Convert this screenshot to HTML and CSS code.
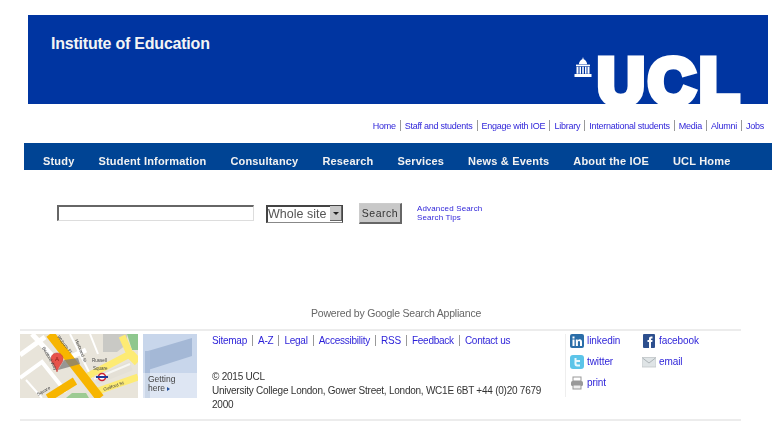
FILE: index.html
```html
<!DOCTYPE html>
<html lang="en">
<head>
<meta charset="utf-8">
<title>Search - Institute of Education</title>
<link rel="stylesheet" href="styles.css">
</head>
<body>
<div class="page">
  <header class="banner">
    <h1 class="title">Institute of Education</h1>
    <div class="logo">
      <svg class="dome" width="18" height="21" viewBox="0 0 18 21" aria-hidden="true">
        <path fill="#fff" d="M9 0l.7 2.2c2 .8 3.2 2.6 3.4 5H4.900c.2-2.400 1.400-4.200 3.400-5z"/>
        <rect fill="#fff" x="2" y="7.600" width="14" height="1.600"/>
        <path fill="#fff" d="M2.500 9.800h2v7h-2zM5.500 9.800h1.500v7H5.500zM8.200 9.800h1.600v7H8.200zM11 9.800h1.500v7H11zM13.500 9.800h2v7h-2z"/>
        <rect fill="#fff" x="0.500" y="17" width="17" height="3"/>
      </svg>
      <span class="wordmark">UCL</span>
    </div>
  </header>

  <nav class="toplinks">
    <a href="#">Home</a><a href="#">Staff and students</a><a href="#">Engage with IOE</a><a href="#">Library</a><a href="#">International students</a><a href="#">Media</a><a href="#">Alumni</a><a href="#">Jobs</a>
  </nav>

  <nav class="mainnav">
    <a href="#">Study</a><a href="#">Student Information</a><a href="#">Consultancy</a><a href="#">Research</a><a href="#">Services</a><a href="#">News &amp; Events</a><a href="#">About the IOE</a><a href="#">UCL Home</a>
  </nav>

  <form class="search">
    <input class="query" type="text" aria-label="Search">
    <span class="selectwrap">
      <select class="scope" aria-label="Scope"><option>Whole site</option></select>
      <span class="arrow"></span>
    </span>
    <button class="go" type="button">Search</button>
    <div class="adv">
      <a href="#">Advanced Search</a>
      <a href="#">Search Tips</a>
    </div>
  </form>

  <p class="powered">Powered by Google Search Appliance</p>

  <footer class="footer">
    <div class="map">
      <svg width="118" height="64" viewBox="0 0 118 64" aria-hidden="true">
        <rect width="118" height="64" fill="#e8e4da"/>
        <g stroke="#fff" fill="none">
          <path stroke-width="5" d="M0 21L25 3M12 0L40 30"/>
          <path stroke-width="4" d="M0 44L22 28 46 58"/>
          <path stroke-width="5" d="M44 26L66 16"/>
          <path stroke-width="2" d="M50 0L72 44M70 0L78 20M6 46L22 64"/>
        </g>
        <path d="M83 0h24v10l-10 8h-14z" fill="#c9c9c5"/>
        <path d="M107 0h11v16h-6z" fill="#8ec78e"/>
        <path d="M46 64l6-5h14l3 5z" fill="#9ccb93"/>
        <path d="M68 42L110 20 102 2" stroke="#fdeb74" stroke-width="7" fill="none"/>
        <path d="M110 20L118 28" stroke="#fdeb74" stroke-width="9" fill="none"/>
        <path d="M75 58L118 43" stroke="#fdeb74" stroke-width="7" fill="none"/>
        <path d="M76 46L111 32" stroke="#e4e0d6" stroke-width="9" fill="none"/>
        <path d="M74 45L110 30" stroke="#f7f7f3" stroke-width="2" fill="none"/>
        <path d="M55 47L28 64" stroke="#f7b500" stroke-width="8" fill="none"/>
        <path d="M30 0L80 64" stroke="#f7b500" stroke-width="9" fill="none"/>
        <path d="M38 36L44 26 58 24 60 30z" fill="#7c7c7c" opacity=".75"/>
        <path d="M37 19c-4 0-6 3-6 6 0 4 4 6 6 13 2-7 6-9 6-13 0-3-2-6-6-6z" fill="#e8524a" stroke="#b33" stroke-width=".5"/>
        <text class="pin" x="37" y="27" text-anchor="middle">A</text>
        <circle cx="82" cy="43" r="3.500" fill="#fff" stroke="#d02030" stroke-width="1.600"/>
        <rect x="76" y="42" width="12" height="2" fill="#223c9a"/>
        <g class="maptext">
          <text x="72" y="28">Russell</text>
          <text x="73" y="36">Square</text>
          <text x="84" y="57" transform="rotate(-19 84 57)">Guilford St</text>
          <text x="37" y="3" transform="rotate(52 37 3)">Woburn Pl</text>
          <text x="22" y="14" transform="rotate(60 22 14)">Bedford Way</text>
          <text x="55" y="6" transform="rotate(68 55 6)">Herbrand St</text>
          <text x="18" y="62" transform="rotate(-30 18 62)">Square</text>
        </g>
      </svg>
    </div>
    <div class="getting">
      <svg class="sign" width="54" height="64" viewBox="0 0 54 64" aria-hidden="true">
        <path d="M5 17L49 4v18L5 36z" fill="#a4b8d6"/>
        <rect x="2" y="17" width="5" height="47" fill="#a9bcd9"/>
        <rect y="39" width="54" height="25" fill="#fff" opacity=".4"/>
      </svg>
      <span class="gettext">Getting<br>here <i class="tri"></i></span>
    </div>
    <div class="info">
      <div class="links">
        <a href="#">Sitemap</a><a href="#">A-Z</a><a href="#">Legal</a><a href="#">Accessibility</a><a href="#">RSS</a><a href="#">Feedback</a><a href="#">Contact us</a>
      </div>
      <p class="address">© 2015 UCL<br>University College London, Gower Street, London, WC1E 6BT +44 (0)20 7679 2000</p>
    </div>
    <div class="social">
      <a href="#"><svg width="14" height="14" viewBox="0 0 14 14" aria-hidden="true"><rect width="14" height="14" rx="2" fill="#2a6da8"/><path fill="#fff" d="M2.500 5.500h2V12h-2zM2.500 2.500h2v2h-2zM5.800 5.500h1.900v1c.5-.8 1.200-1.200 2.100-1.200 1.500 0 2.200 1 2.200 2.600V12h-2V8.300c0-.8-.3-1.200-.9-1.200s-1.200.4-1.200 1.300V12h-2z"/></svg>linkedin</a>
      <a href="#"><svg width="14" height="14" viewBox="0 0 14 14" aria-hidden="true"><rect x="1" width="12" height="14" rx="1" fill="#2d4f8e"/><path fill="#fff" d="M7 14V8H5.500V6H7V4.700C7 3.200 7.900 2.400 9.200 2.400h1.300v2H9.600c-.5 0-.6.300-.6.700V6h1.500l-.2 2H9v6z"/></svg>facebook</a>
      <a href="#"><svg width="14" height="14" viewBox="0 0 14 14" aria-hidden="true"><rect width="14" height="14" rx="3" fill="#5cc4e8"/><path fill="#e8f8fd" d="M4.500 3h2v2H10v2H6.500v1.500c0 .7.300 1 1 1H10v2H7c-1.700 0-2.500-.9-2.500-2.500z"/></svg>twitter</a>
      <a href="#"><svg width="14" height="14" viewBox="0 0 14 14" aria-hidden="true"><rect y="2.500" width="14" height="9.500" fill="#dfe4e6" stroke="#c0c6c9" stroke-width=".8"/><path d="M.5 3L7 8l6.500-5" fill="none" stroke="#aeb5b9"/></svg>email</a>
      <a href="#"><svg width="14" height="14" viewBox="0 0 14 14" aria-hidden="true"><rect x="3" y="1" width="8" height="4" fill="#fff" stroke="#999"/><rect x="1" y="5" width="12" height="5" rx="1.500" fill="#999"/><rect x="3" y="9" width="8" height="4" fill="#eee" stroke="#999"/></svg>print</a>
    </div>
  </footer>
</div>
</body>
</html>
```

FILE: styles.css
```css
html, body {
  margin: 0;
  padding: 0;
  background: #fff;
}
body {
  font-family: "Liberation Sans", Arial, sans-serif;
  overflow: hidden;
}
a {
  color: #2a1fd8;
  text-decoration: none;
}
.page {
  width: 777px;
  height: 423px;
  padding-top: 15px;
  box-sizing: border-box;
  overflow: hidden;
  filter: blur(0.35px);
}
.banner {
  display: flex;
  justify-content: space-between;
  height: 89px;
  margin: 0 9px 0 28px;
  background: #0035a1;
  overflow: hidden;
}
.title {
  margin: 20px 0 0 23px;
  font-size: 16px;
  line-height: 18px;
  font-weight: bold;
  letter-spacing: -0.22px;
  color: #f4f4f4;
}
.logo {
  display: flex;
  align-items: flex-start;
  margin: 42px 25px 0 0;
}
.dome {
  margin: 0 5px 0 0;
}
.wordmark {
  font-size: 65px;
  line-height: 50px;
  font-weight: bold;
  color: #fff;
  -webkit-text-stroke: 7px #fff;
  letter-spacing: 4px;
}
.toplinks {
  display: flex;
  justify-content: flex-end;
  height: 39px;
  padding: 16px 13px 0 0;
  box-sizing: border-box;
  font-size: 9px;
  line-height: 12px;
  letter-spacing: -0.25px;
}
.toplinks a {
  padding: 0 4px 0 4px;
  border-right: 1px solid #999;
  height: 11px;
}
.toplinks a:last-child {
  border-right: 0;
  padding-right: 0;
}
.mainnav {
  display: flex;
  gap: 24px;
  height: 27px;
  margin: 0 5px 0 24px;
  padding-left: 19px;
  box-sizing: border-box;
  background: #004494;
  font-size: 11px;
  line-height: 36px;
  font-weight: bold;
  letter-spacing: 0.18px;
}
.mainnav a {
  color: #f2f2f2;
}
.search {
  display: flex;
  align-items: flex-start;
  height: 134px;
  padding: 33px 0 0 57px;
  box-sizing: border-box;
}
.query {
  width: 197px;
  height: 16px;
  margin: 2px 12px 0 0;
  padding: 0;
  box-sizing: border-box;
  border-style: solid;
  border-width: 2px 1px 1px 2px;
  border-color: #666 #ddd #ddd #666;
  background: #fff;
}
.selectwrap {
  position: relative;
  display: block;
  width: 77px;
  height: 18px;
  margin: 1px 16px 0 0;
}
.scope {
  appearance: none;
  width: 77px;
  height: 18px;
  padding: 0;
  box-sizing: border-box;
  border-style: solid;
  border-width: 2px 1px 1px 2px;
  border-color: #444 #444 #888 #444;
  border-radius: 0;
  background: #fff;
  font-family: "Liberation Sans", Arial, sans-serif;
  font-size: 12.500px;
  color: #555;
}
.arrow {
  position: absolute;
  top: 2px;
  right: 1px;
  width: 12px;
  height: 15px;
  background: #c8c8c8;
  border-right: 1px solid #666;
  border-bottom: 1px solid #666;
  box-sizing: border-box;
}
.arrow::after {
  content: "";
  position: absolute;
  top: 6px;
  left: 3px;
  border: 3px solid transparent;
  border-top: 3px solid #222;
  border-bottom: 0;
}
.go {
  width: 43px;
  height: 21px;
  margin: 0 15px 0 0;
  padding: 0;
  border: 1px solid #ccc;
  border-right: 2px solid #666;
  border-bottom: 2px solid #666;
  border-radius: 0;
  background: #c8c8c8;
  font-family: "Liberation Sans", Arial, sans-serif;
  font-size: 10.500px;
  letter-spacing: 0.5px;
  color: #333;
}
.adv {
  display: flex;
  flex-direction: column;
  padding-top: 1px;
  font-size: 8px;
  line-height: 9px;
  letter-spacing: 0.15px;
}
.powered {
  margin: 0;
  height: 25px;
  padding-top: 3px;
  box-sizing: border-box;
  padding-left: 311px;
  font-size: 10.500px;
  line-height: 12px;
  letter-spacing: -0.2px;
  color: #666;
}
.footer {
  display: flex;
  width: 721px;
  height: 92px;
  margin-left: 20px;
  padding-top: 3px;
  box-sizing: border-box;
  border-top: 2px solid #ececec;
  border-bottom: 2px solid #ececec;
}
.map {
  width: 118px;
  height: 64px;
  margin-right: 5px;
}
.maptext {
  font-family: "Liberation Sans", Arial, sans-serif;
  font-size: 4.500px;
  fill: #444;
}
.pin {
  font-family: "Liberation Sans", Arial, sans-serif;
  font-size: 6px;
  fill: #8a1c16;
}
.getting {
  position: relative;
  width: 54px;
  height: 64px;
  margin-right: 15px;
  background: #c8d6eb;
}
.sign {
  display: block;
}
.gettext {
  position: absolute;
  left: 5px;
  top: 41px;
  font-size: 8.500px;
  line-height: 8.500px;
  color: #444;
}
.tri {
  display: inline-block;
  border: 2px solid transparent;
  border-left: 3px solid #1f4fa0;
  border-right: 0;
}
.info {
  width: 340px;
  margin-right: 13px;
  font-size: 10px;
  line-height: 14px;
  letter-spacing: -0.24px;
}
.links {
  display: flex;
  height: 14px;
}
.links a {
  padding-right: 5px;
  margin-right: 5px;
  border-right: 1px solid #999;
  height: 11px;
  margin-top: 1px;
  line-height: 12px;
}
.links a:last-child {
  border-right: 0;
}
.address {
  margin: 22px 0 0;
  color: #333;
}
.social {
  display: grid;
  grid-template-columns: 72px 80px;
  grid-auto-rows: 21px;
  height: 63px;
  padding-left: 4px;
  box-sizing: content-box;
  border-left: 1px solid #eee;
  font-size: 10px;
  line-height: 14px;
  letter-spacing: -0.08px;
}
.social a {
  display: flex;
  align-items: flex-start;
  gap: 3px;
}
```
